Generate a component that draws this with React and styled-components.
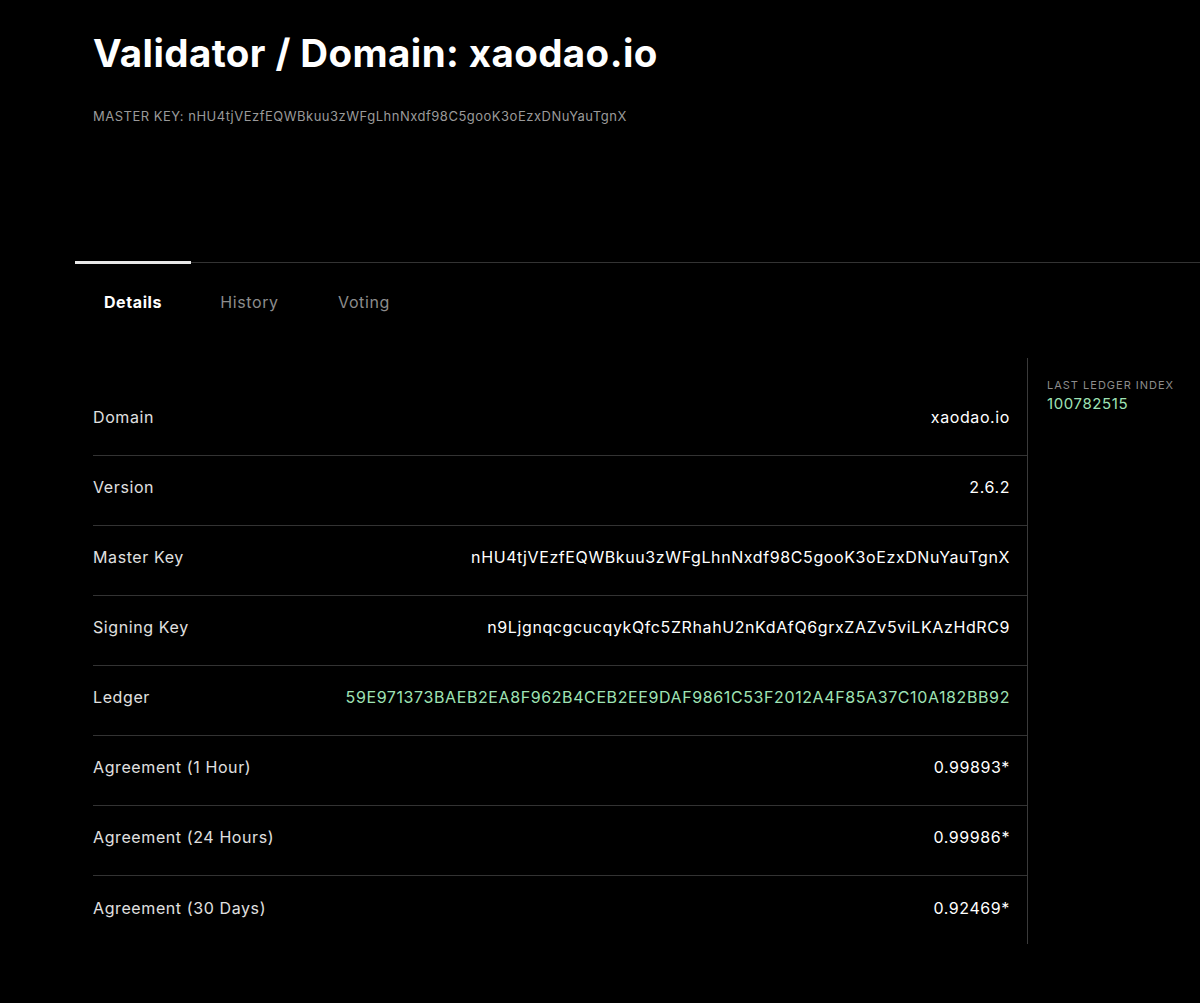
import styled, { createGlobalStyle } from 'styled-components';

const GlobalStyle = createGlobalStyle`
  html, body {
    margin: 0;
    background: #000;
    color: #fff;
    font-family: Inter, "Open Sans", sans-serif;
  }
`;

const Page = styled.div`
  min-height: 1003px;
  background: #000;
  padding-left: 75px;
  overflow: hidden;
`;

const Header = styled.header`
  padding: 29px 0 0 18px;
  height: 262px;
  box-sizing: border-box;
`;

const Title = styled.h1`
  margin: 0;
  font-size: 38.5px;
  font-weight: 700;
  letter-spacing: 0.4px;
  line-height: 48px;
`;

const MasterKey = styled.div`
  margin-top: 31px;
  font-size: 13px;
  color: #9a9a9a;
  letter-spacing: 0.5px;
`;

const TabBar = styled.nav`
  display: flex;
  border-top: 1px solid #333;
  height: 95px;
`;

const Tab = styled.div`
  width: ${p => p.$w}px;
  box-sizing: border-box;
  padding-top: 28px;
  text-align: center;
  font-size: 16px;
  letter-spacing: 0.6px;
  font-weight: ${p => (p.$active ? 700 : 400)};
  color: ${p => (p.$active ? '#fff' : '#8c8c8c')};
  border-top: 3px solid ${p => (p.$active ? '#e8e8e8' : 'transparent')};
  margin-top: -2px;
`;

const Body = styled.div`
  display: flex;
  padding-left: 18px;
`;

const Main = styled.section`
  width: 935px;
  border-right: 1px solid #3a3a3a;
  padding-top: 28px;
  height: 586px;
  box-sizing: border-box;
`;

const Row = styled.div`
  display: flex;
  justify-content: space-between;
  align-items: center;
  height: 70px;
  padding: 0 17px 7px 0;
  box-sizing: border-box;
  border-bottom: ${p => (p.$last ? 'none' : '1px solid #333')};
  font-size: 16px;
  letter-spacing: 0.6px;
`;

const Label = styled.span`
  color: #e0e0e0;
`;

const Value = styled.span`
  color: ${p => (p.$green ? '#9fe3b5' : '#fff')};
`;

const Side = styled.aside`
  padding: 20px 0 0 19px;
`;

const SideLabel = styled.div`
  font-size: 11px;
  letter-spacing: 1px;
  color: #8c8c8c;
`;

const SideValue = styled.div`
  font-size: 15px;
  letter-spacing: 0.6px;
  color: #9fe3b5;
  margin-top: 2px;
`;

const key = 'nHU4tjVEzfEQWBkuu3zWFgLhnNxdf98C5gooK3oEzxDNuYauTgnX';

const rows = [
  ['Domain', 'xaodao.io'],
  ['Version', '2.6.2'],
  ['Master Key', key],
  ['Signing Key', 'n9LjgnqcgcucqykQfc5ZRhahU2nKdAfQ6grxZAZv5viLKAzHdRC9'],
  ['Ledger', '59E971373BAEB2EA8F962B4CEB2EE9DAF9861C53F2012A4F85A37C10A182BB92', true],
  ['Agreement (1 Hour)', '0.99893*'],
  ['Agreement (24 Hours)', '0.99986*'],
  ['Agreement (30 Days)', '0.92469*'],
];

export default function App() {
  return (
    <Page>
      <GlobalStyle />
      <Header>
        <Title>Validator / Domain: xaodao.io</Title>
        <MasterKey>MASTER KEY: {key}</MasterKey>
      </Header>
      <TabBar>
        <Tab $active $w={116}>Details</Tab>
        <Tab $w={117}>History</Tab>
        <Tab $w={112}>Voting</Tab>
      </TabBar>
      <Body>
        <Main>
          {rows.map(([label, value, green], i) => (
            <Row key={label} $last={i === rows.length - 1}>
              <Label>{label}</Label>
              <Value $green={green}>{value}</Value>
            </Row>
          ))}
        </Main>
        <Side>
          <SideLabel>LAST LEDGER INDEX</SideLabel>
          <SideValue>100782515</SideValue>
        </Side>
      </Body>
    </Page>
  );
}
